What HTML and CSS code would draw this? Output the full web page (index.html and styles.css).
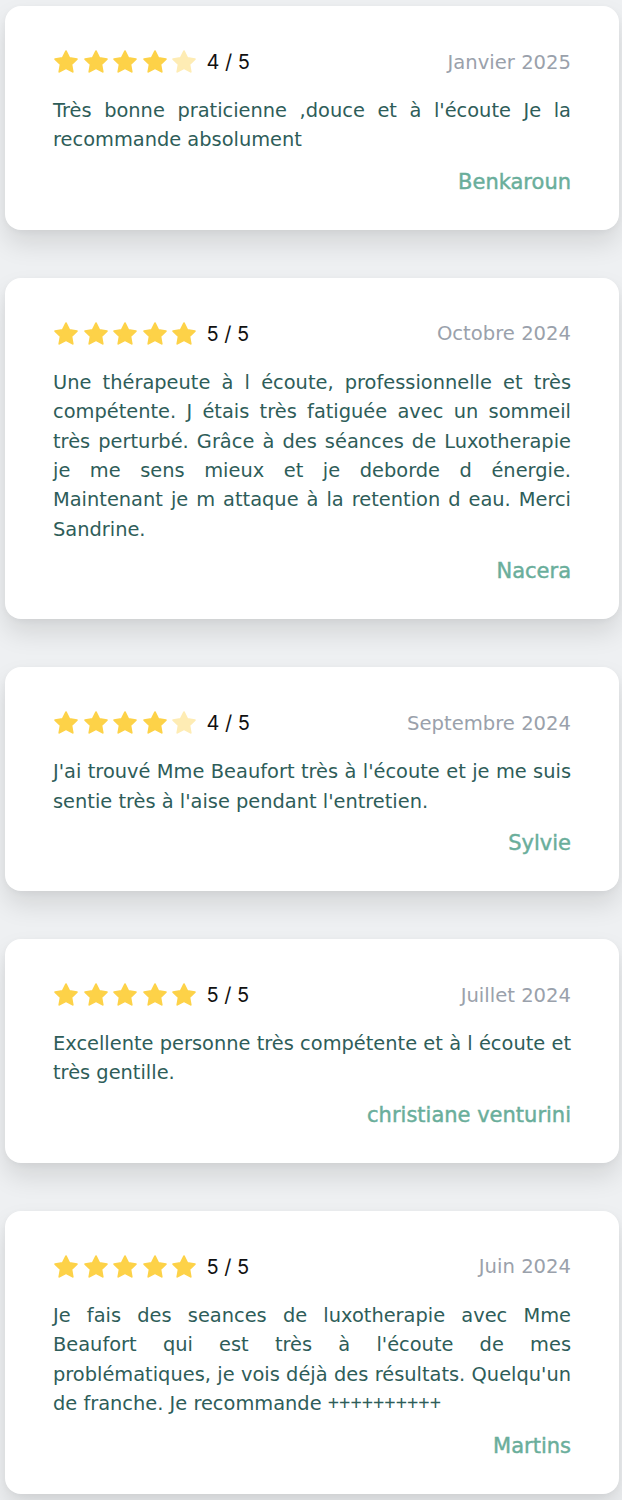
FILE: index.html
```html
<!DOCTYPE html>
<html lang="fr">
<head>
<meta charset="utf-8">
<title>Avis</title>
<link rel="stylesheet" href="styles.css">
</head>
<body>
<svg class="defs" width="0" height="0" aria-hidden="true">
  <defs>
    <path id="star" d="M12 2l3.09 6.26L22 9.27l-5 4.87 1.18 6.88L12 17.770l-6.18 3.25L7 14.14 2 9.27l6.91-1.01L12 2z"/>
  </defs>
</svg>
<main class="list">

  <article class="card">
    <div class="head">
      <div class="rating">
        <div class="stars">
          <svg class="star on" viewBox="1 1 22 22"><use href="#star"/></svg>
          <svg class="star on" viewBox="1 1 22 22"><use href="#star"/></svg>
          <svg class="star on" viewBox="1 1 22 22"><use href="#star"/></svg>
          <svg class="star on" viewBox="1 1 22 22"><use href="#star"/></svg>
          <svg class="star off" viewBox="1 1 22 22"><use href="#star"/></svg>
        </div>
        <span class="score">4 / 5</span>
      </div>
      <span class="date">Janvier 2025</span>
    </div>
    <p class="text">Très bonne praticienne ,douce et à l'écoute Je la recommande absolument</p>
    <p class="author">Benkaroun</p>
  </article>

  <article class="card">
    <div class="head">
      <div class="rating">
        <div class="stars">
          <svg class="star on" viewBox="1 1 22 22"><use href="#star"/></svg>
          <svg class="star on" viewBox="1 1 22 22"><use href="#star"/></svg>
          <svg class="star on" viewBox="1 1 22 22"><use href="#star"/></svg>
          <svg class="star on" viewBox="1 1 22 22"><use href="#star"/></svg>
          <svg class="star on" viewBox="1 1 22 22"><use href="#star"/></svg>
        </div>
        <span class="score">5 / 5</span>
      </div>
      <span class="date">Octobre 2024</span>
    </div>
    <p class="text">Une thérapeute à l écoute, professionnelle et très compétente. J étais très fatiguée avec un sommeil très perturbé. Grâce à des séances de Luxotherapie je me sens mieux et je deborde d énergie. Maintenant je m attaque à la retention d eau. Merci Sandrine.</p>
    <p class="author">Nacera</p>
  </article>

  <article class="card">
    <div class="head">
      <div class="rating">
        <div class="stars">
          <svg class="star on" viewBox="1 1 22 22"><use href="#star"/></svg>
          <svg class="star on" viewBox="1 1 22 22"><use href="#star"/></svg>
          <svg class="star on" viewBox="1 1 22 22"><use href="#star"/></svg>
          <svg class="star on" viewBox="1 1 22 22"><use href="#star"/></svg>
          <svg class="star off" viewBox="1 1 22 22"><use href="#star"/></svg>
        </div>
        <span class="score">4 / 5</span>
      </div>
      <span class="date">Septembre 2024</span>
    </div>
    <p class="text">J'ai trouvé Mme Beaufort très à l'écoute et je me suis sentie très à l'aise pendant l'entretien.</p>
    <p class="author">Sylvie</p>
  </article>

  <article class="card">
    <div class="head">
      <div class="rating">
        <div class="stars">
          <svg class="star on" viewBox="1 1 22 22"><use href="#star"/></svg>
          <svg class="star on" viewBox="1 1 22 22"><use href="#star"/></svg>
          <svg class="star on" viewBox="1 1 22 22"><use href="#star"/></svg>
          <svg class="star on" viewBox="1 1 22 22"><use href="#star"/></svg>
          <svg class="star on" viewBox="1 1 22 22"><use href="#star"/></svg>
        </div>
        <span class="score">5 / 5</span>
      </div>
      <span class="date">Juillet 2024</span>
    </div>
    <p class="text">Excellente personne très compétente et à l écoute et très gentille.</p>
    <p class="author">christiane venturini</p>
  </article>

  <article class="card">
    <div class="head">
      <div class="rating">
        <div class="stars">
          <svg class="star on" viewBox="1 1 22 22"><use href="#star"/></svg>
          <svg class="star on" viewBox="1 1 22 22"><use href="#star"/></svg>
          <svg class="star on" viewBox="1 1 22 22"><use href="#star"/></svg>
          <svg class="star on" viewBox="1 1 22 22"><use href="#star"/></svg>
          <svg class="star on" viewBox="1 1 22 22"><use href="#star"/></svg>
        </div>
        <span class="score">5 / 5</span>
      </div>
      <span class="date">Juin 2024</span>
    </div>
    <p class="text">Je fais des seances de luxotherapie avec Mme Beaufort qui est très à l'écoute de mes problématiques, je vois déjà des résultats. Quelqu'un de franche. Je recommande <span class="plus">++++++++++</span></p>
    <p class="author">Martins</p>
  </article>

</main>
</body>
</html>
```

FILE: styles.css
```css
* { box-sizing: border-box; }

html, body {
  margin: 0;
  padding: 0;
  background: #eef0f2;
}

.defs {
  position: absolute;
  width: 0;
  height: 0;
  overflow: hidden;
}

.list {
  display: flex;
  flex-direction: column;
  gap: 48px;
  padding: 6px 3px 6px 5px;
  font-family: "DejaVu Sans", "Noto Sans", sans-serif;
}

.card {
  background: #ffffff;
  border-radius: 16px;
  padding: 40px 48px 32px;
  box-shadow: 0 14px 26px rgba(0, 0, 0, 0.11), 0 2px 6px rgba(0, 0, 0, 0.04);
}

.head {
  display: flex;
  justify-content: space-between;
  align-items: center;
  height: 32px;
}

.rating {
  display: flex;
  align-items: center;
  gap: 10px;
}

.stars {
  display: flex;
  gap: 5.6px;
  padding-left: 1px;
}

.star {
  width: 24px;
  height: 24px;
  display: block;
}

.star use {
  stroke-width: 1.6;
  stroke-linejoin: round;
}

.star.on { fill: #fdd248; stroke: #fdd248; }
.star.off { fill: #feecb4; stroke: #feecb4; }

.score {
  font-family: "Inter", "Liberation Sans", sans-serif;
  font-size: 20px;
  color: #111111;
}

.date {
  font-size: 19.6px;
  color: #9aa1ab;
}

.text {
  margin: 18px 0 0;
  font-size: 19.4px;
  line-height: 29.4px;
  color: #2e5d59;
  text-align: justify;
}

.plus {
  font-family: "Liberation Sans", sans-serif;
}

.author {
  margin: 11px 0 0;
  font-size: 21px;
  line-height: 32px;
  color: #6aae9b;
  text-align: right;
  -webkit-text-stroke: 0.45px #6aae9b;
}
```
